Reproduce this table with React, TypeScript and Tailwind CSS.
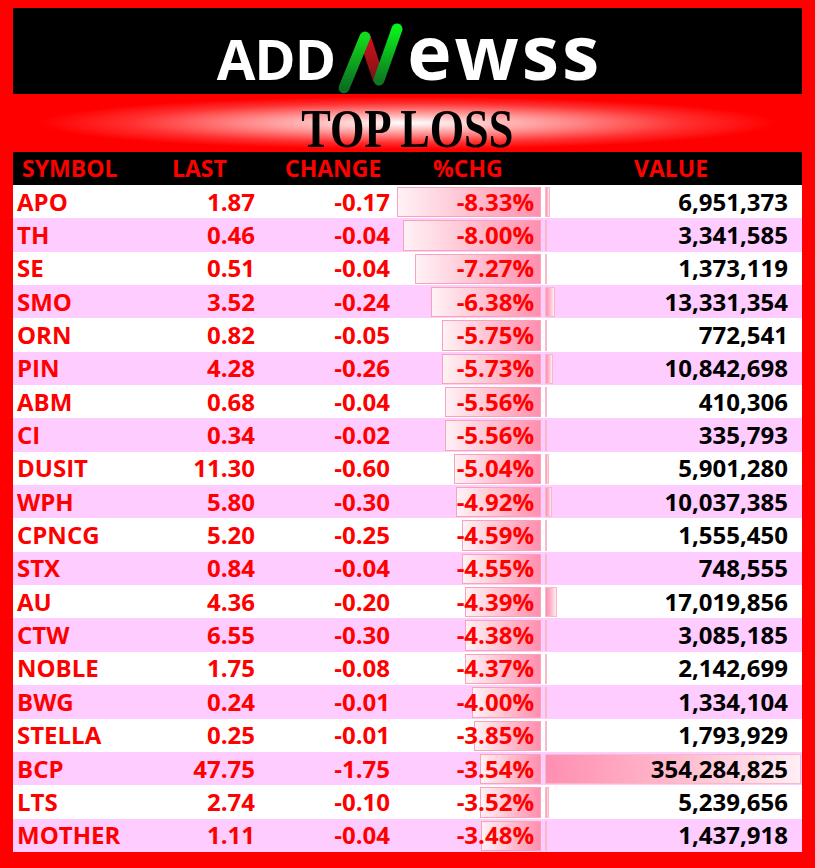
import React from "react";

// ─── Data ────────────────────────────────────────────────────────────

type Row = [string, string, string, string, string];

const ROWS: Row[] = [
  ["APO", "1.87", "-0.17", "-8.33%", "6,951,373"],
  ["TH", "0.46", "-0.04", "-8.00%", "3,341,585"],
  ["SE", "0.51", "-0.04", "-7.27%", "1,373,119"],
  ["SMO", "3.52", "-0.24", "-6.38%", "13,331,354"],
  ["ORN", "0.82", "-0.05", "-5.75%", "772,541"],
  ["PIN", "4.28", "-0.26", "-5.73%", "10,842,698"],
  ["ABM", "0.68", "-0.04", "-5.56%", "410,306"],
  ["CI", "0.34", "-0.02", "-5.56%", "335,793"],
  ["DUSIT", "11.30", "-0.60", "-5.04%", "5,901,280"],
  ["WPH", "5.80", "-0.30", "-4.92%", "10,037,385"],
  ["CPNCG", "5.20", "-0.25", "-4.59%", "1,555,450"],
  ["STX", "0.84", "-0.04", "-4.55%", "748,555"],
  ["AU", "4.36", "-0.20", "-4.39%", "17,019,856"],
  ["CTW", "6.55", "-0.30", "-4.38%", "3,085,185"],
  ["NOBLE", "1.75", "-0.08", "-4.37%", "2,142,699"],
  ["BWG", "0.24", "-0.01", "-4.00%", "1,334,104"],
  ["STELLA", "0.25", "-0.01", "-3.85%", "1,793,929"],
  ["BCP", "47.75", "-1.75", "-3.54%", "354,284,825"],
  ["LTS", "2.74", "-0.10", "-3.52%", "5,239,656"],
  ["MOTHER", "1.11", "-0.04", "-3.48%", "1,437,918"],
];

const MAX_VALUE = Math.max(...ROWS.map((r) => Number(r[4].replace(/,/g, ""))));

// ─── Logo ────────────────────────────────────────────────────────────

function LogoN() {
  return (
    <svg
      width="66"
      height="52"
      viewBox="0 0 66 52"
      className="overflow-visible mx-[3px]"
    >
      <defs>
        <linearGradient id="gL" x1="0" y1="1" x2="0" y2="0">
          <stop offset="0%" stopColor="#0b6e22" />
          <stop offset="100%" stopColor="#12d91c" />
        </linearGradient>
        <linearGradient id="gR" x1="0" y1="1" x2="0" y2="0">
          <stop offset="0%" stopColor="#0d7a22" />
          <stop offset="100%" stopColor="#0af01a" />
        </linearGradient>
        <linearGradient id="rD" x1="0" y1="0" x2="0" y2="1">
          <stop offset="0%" stopColor="#d0101c" />
          <stop offset="100%" stopColor="#7a1418" />
        </linearGradient>
      </defs>
      <line x1="27" y1="10" x2="41" y2="52" stroke="url(#rD)" strokeWidth="12" />
      <line
        x1="6"
        y1="60"
        x2="27"
        y2="9"
        stroke="url(#gL)"
        strokeWidth="11"
        strokeLinecap="round"
      />
      <line
        x1="41"
        y1="52"
        x2="59"
        y2="1"
        stroke="url(#gR)"
        strokeWidth="11"
        strokeLinecap="round"
      />
    </svg>
  );
}

// ─── Table row ───────────────────────────────────────────────────────

function DataRow({ row, index }: { row: Row; index: number }) {
  const [symbol, last, change, pct, value] = row;
  const pctWidth = Math.abs(parseFloat(pct)) * 17.3;
  const valueWidth = (Number(value.replace(/,/g, "")) / MAX_VALUE) * 256;

  return (
    <div
      className={
        "grid flex-1 min-h-0 grid-cols-[152px_94px_135px_148px_1fr] items-stretch " +
        (index % 2 === 1 ? "bg-[#ffccff]" : "bg-white")
      }
    >
      <div className="flex items-center pl-[4px] text-[#ff0000]">{symbol}</div>
      <div className="flex items-center justify-end pr-[4px] text-[#ff0000]">
        {last}
      </div>
      <div className="flex items-center justify-end pr-[4px] text-[#ff0000]">
        {change}
      </div>
      <div className="relative flex items-center justify-end pr-[8px] text-[#ff0000]">
        <div
          className="absolute right-[1px] top-[2px] bottom-[1px] border border-[#f7a3b8] bg-[linear-gradient(to_right,#fff2f6,#ffb6c9_60%,#ff8fae)]"
          style={{ width: pctWidth }}
        />
        <span className="relative">{pct}</span>
      </div>
      <div className="relative flex items-center justify-end pr-[14px] text-black">
        <div
          className="absolute left-[3px] top-[2px] bottom-[1px] border border-[#f7b8c8] bg-[linear-gradient(to_right,#ff8fb2,#ffb8cc_50%,#ffeef4)]"
          style={{ width: valueWidth }}
        />
        <span className="relative">{value}</span>
      </div>
    </div>
  );
}

// ─── Page ────────────────────────────────────────────────────────────

export default function App() {
  return (
    <div className="w-[815px] h-[868px] bg-[#ff0000] flex flex-col pt-[8px] pb-[16px] overflow-hidden">
      {/* Logo box */}
      <div className="mx-[13px] h-[86px] bg-black flex items-center justify-center">
        <div className="flex items-baseline text-white font-['Open_Sans','Liberation_Sans',sans-serif] font-bold leading-none pl-[4px]">
          <span className="text-[56px] tracking-[-1px]">ADD</span>
          <LogoN />
          <span className="text-[75px] tracking-[3px]">ewss</span>
        </div>
      </div>

      {/* Title band */}
      <div className="h-[58px] flex justify-center pt-[15px] bg-[radial-gradient(ellipse_at_center,#ffffff_0%,#ffd6d6_10%,#ff8a8a_28%,#ff3030_48%,#ff0000_64%)]">
        <span className="inline-block h-[40px] text-[54px] leading-[40px] font-bold text-black font-['Liberation_Serif','Times_New_Roman',serif] scale-x-[0.82]">
          TOP LOSS
        </span>
      </div>

      {/* Column headers */}
      <div className="mx-[13px] h-[33px] bg-black grid grid-cols-[150px_113px_148px_201px_1fr] items-center pl-[9px] text-[#ff0000] text-[23px] font-bold font-['Open_Sans','Liberation_Sans',sans-serif] leading-none">
        <span>SYMBOL</span>
        <span>LAST</span>
        <span>CHANGE</span>
        <span>%CHG</span>
        <span>VALUE</span>
      </div>

      {/* Rows */}
      <div className="mx-[13px] h-[667px] flex flex-col text-[24px] font-bold font-['Open_Sans','Liberation_Sans',sans-serif] leading-none">
        {ROWS.map((row, i) => (
          <DataRow key={row[0]} row={row} index={i} />
        ))}
      </div>
    </div>
  );
}
